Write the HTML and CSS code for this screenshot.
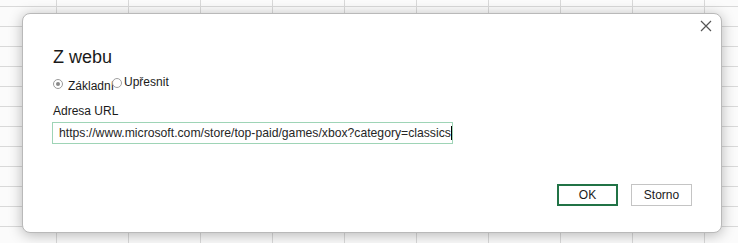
FILE: index.html
```html
<!DOCTYPE html>
<html lang="cs">
<head>
    <meta charset="UTF-8">
    <title>Z webu</title>
    <link rel="stylesheet" href="styles.css">
</head>
<body>

<div class="dialog">
    <div class="close-row">
        <svg class="close" width="12" height="12" viewBox="0 0 12 12">
            <path d="M1 1 L11 11 M11 1 L1 11" stroke="#555" stroke-width="1.2" fill="none"/>
        </svg>
    </div>

    <div class="content">
        <h2>Z webu</h2>

        <div class="radios">
            <span class="radio checked"></span>
            <span class="radio-label">Základní</span>
            <span class="radio second"></span>
            <span class="radio-label upper">Upřesnit</span>
        </div>

        <label class="field-label">Adresa URL</label>
        <div class="url-input">https://www.microsoft.com/store/top-paid/games/xbox?category=classics<span class="caret"></span></div>

        <div class="buttons">
            <button type="button" class="ok">OK</button>
            <button type="button" class="cancel">Storno</button>
        </div>
    </div>
</div>

</body>
</html>
```

FILE: styles.css
```css
body {
    margin: 0;
    padding: 13px 0 0 22px;
    height: 243px;
    box-sizing: border-box;
    overflow: hidden;
    font-family: 'Segoe UI', 'Liberation Sans', Arial, sans-serif;
    background-color: #fbfbfb;
    background-image:
        linear-gradient(to right, #d9d9d9 1px, transparent 1px),
        linear-gradient(to bottom, #d9d9d9 1px, transparent 1px);
    background-size: 72px 20px;
    background-position: 56px 6px;
}

.dialog {
    width: 700px;
    height: 220px;
    box-sizing: border-box;
    background-color: #ffffff;
    border: 1px solid #b9b9b9;
    border-radius: 8px;
    box-shadow: 0 2px 14px rgba(0, 0, 0, 0.28);
}

.close-row {
    display: flex;
    justify-content: flex-end;
    padding: 6px 9px 0 0;
    height: 14px;
}

.content {
    padding: 0 0 0 30px;
}

h2 {
    margin: 11px 0 0 0;
    font-size: 18px;
    font-weight: normal;
    color: #1a1a1a;
    line-height: 24px;
}

.radios {
    display: flex;
    align-items: center;
    margin-top: 6px;
    height: 18px;
    font-size: 12px;
    color: #1a1a1a;
}

.radio {
    width: 8px;
    height: 8px;
    border: 1px solid #a0a0a0;
    border-radius: 50%;
    background-color: #ffffff;
    display: inline-flex;
    align-items: center;
    justify-content: center;
    flex-shrink: 0;
}

.radio.checked {
    border-color: #9a9a9a;
}

.radio.checked::after {
    content: '';
    width: 4px;
    height: 4px;
    border-radius: 50%;
    background-color: #8a8a8a;
}

.radio-label {
    margin-left: 5px;
    position: relative;
    top: 2px;
}

.radio.second {
    margin-left: -2px;
    position: relative;
    top: -1px;
}

.radio-label.upper {
    margin-left: 2px;
    top: -2px;
}

.field-label {
    display: block;
    margin-top: 11px;
    font-size: 12px;
    color: #1a1a1a;
    line-height: 15px;
}

.url-input {
    width: 401px;
    height: 22px;
    box-sizing: border-box;
    margin-top: 3px;
    margin-left: -1px;
    padding: 0 0 0 6px;
    border: 1px solid #9ed4b6;
    font-size: 12.2px;
    line-height: 20px;
    color: #262626;
    white-space: nowrap;
    overflow: hidden;
    display: flex;
    align-items: center;
}

.caret {
    display: inline-block;
    width: 1px;
    height: 14px;
    background-color: #000;
    flex-shrink: 0;
}

.buttons {
    display: flex;
    justify-content: flex-end;
    gap: 13px;
    margin-top: 40px;
    padding-right: 29px;
}

.buttons button {
    width: 61px;
    height: 22px;
    background-color: #ffffff;
    font-family: inherit;
    font-size: 12px;
    color: #1a1a1a;
    padding: 0;
    cursor: pointer;
}

.ok {
    border: 2px solid #217346;
}

.cancel {
    border: 1px solid #c4c4c4;
}
```
